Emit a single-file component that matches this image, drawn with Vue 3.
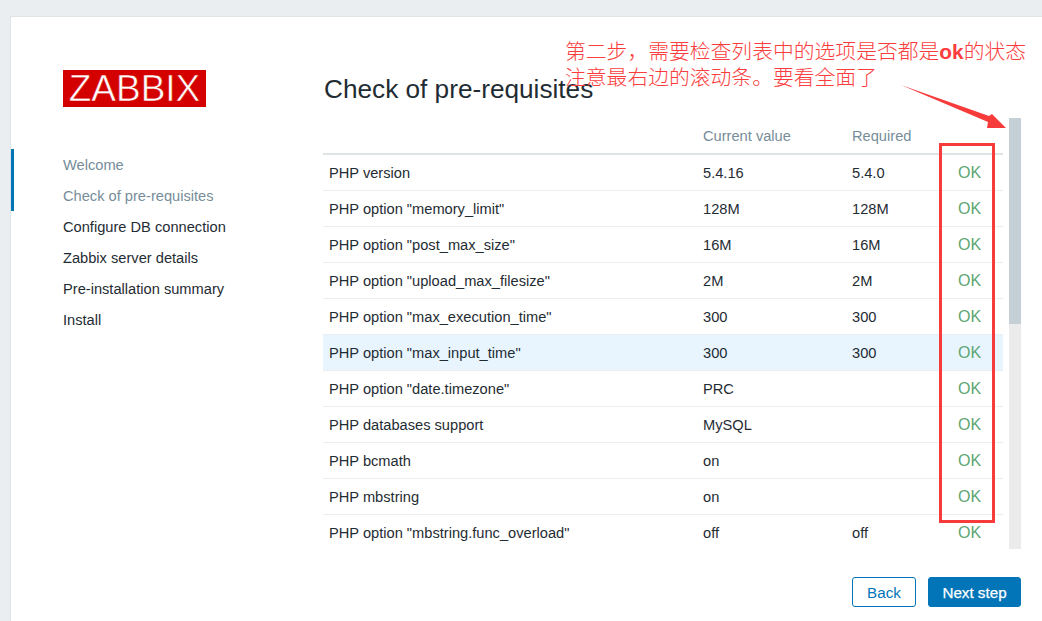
<script setup>
const steps = [
  { label: 'Welcome', done: true },
  { label: 'Check of pre-requisites', done: true },
  { label: 'Configure DB connection', done: false },
  { label: 'Zabbix server details', done: false },
  { label: 'Pre-installation summary', done: false },
  { label: 'Install', done: false },
]
const rows = [
  ['PHP version', '5.4.16', '5.4.0'],
  ['PHP option "memory_limit"', '128M', '128M'],
  ['PHP option "post_max_size"', '16M', '16M'],
  ['PHP option "upload_max_filesize"', '2M', '2M'],
  ['PHP option "max_execution_time"', '300', '300'],
  ['PHP option "max_input_time"', '300', '300'],
  ['PHP option "date.timezone"', 'PRC', ''],
  ['PHP databases support', 'MySQL', ''],
  ['PHP bcmath', 'on', ''],
  ['PHP mbstring', 'on', ''],
  ['PHP option "mbstring.func_overload"', 'off', 'off'],
]
</script>

<template>
  <div class="page">
    <div class="card">
      <aside class="side">
        <div class="logo">ZABBIX</div>
        <ul class="nav">
          <li v-for="s in steps" :key="s.label" :class="{ done: s.done }">{{ s.label }}</li>
        </ul>
      </aside>
      <main class="main">
        <h1 class="title">Check of pre-requisites</h1>
        <div class="scroller">
          <div class="list">
            <table>
              <colgroup>
                <col class="c1" /><col class="c2" /><col class="c3" /><col />
              </colgroup>
              <thead>
                <tr><th></th><th>Current value</th><th>Required</th><th></th></tr>
              </thead>
              <tbody>
                <tr v-for="(r, i) in rows" :key="r[0]" :class="{ hover: i === 5 }">
                  <td>{{ r[0] }}</td>
                  <td>{{ r[1] }}</td>
                  <td>{{ r[2] }}</td>
                  <td class="ok">OK</td>
                </tr>
              </tbody>
            </table>
          </div>
          <div class="track"><div class="thumb"></div></div>
        </div>
        <div class="footer">
          <button class="btn alt">Back</button>
          <button class="btn">Next step</button>
        </div>
      </main>
    </div>

    <div class="note">
      <div class="line">第二步，需要检查列表中的选项是否都是<b>ok</b>的状态</div>
      <div class="line">注意最右边的滚动条。要看全面了</div>
    </div>
    <svg class="arrow" width="1042" height="621" viewBox="0 0 1042 621">
      <polygon points="901,85 989,116 992,114 1006,128 987,128 988,122" fill="#f73a3a" />
    </svg>
    <div class="redbox"></div>
  </div>
</template>

<style>
html, body { margin: 0; background: #ebeef0; }
</style>

<style scoped>
.page {
  position: relative;
  width: 1042px;
  height: 621px;
  overflow: hidden;
  padding: 16px 0 0 10px;
  box-sizing: border-box;
  font-family: "Liberation Sans", Arial, sans-serif;
  font-size: 14.65px;
  color: #1f2c33;
}
.card {
  display: flex;
  height: 640px;
  background: #fff;
  border: 1px solid #dfe4e7;
  border-right: 0;
  border-bottom: 0;
}
.side { width: 312px; flex: none; padding-top: 53px; box-sizing: border-box; }
.logo {
  width: 143px;
  height: 37px;
  margin-left: 52px;
  background: #d40000;
  color: #fff;
  font-size: 37px;
  -webkit-text-stroke: 0.6px #d40000;
  line-height: 38px;
  text-align: center;
  white-space: nowrap;
}
.nav { list-style: none; margin: 42px 0 0; padding: 0; }
.nav li {
  height: 31px;
  line-height: 33px;
  padding-left: 49px;
  border-left: 3px solid transparent;
}
.nav li.done { color: #768d99; border-left-color: #0275b8; }
.main { flex: 1; min-width: 0; }
.title {
  margin: 0;
  padding: 54px 0 0 1px;
  height: 47px;
  font-size: 26.2px;
  line-height: 36px;
  font-weight: 400;
  box-sizing: content-box;
}
.scroller { display: flex; gap: 6px; width: 698px; height: 431px; }
.list { width: 680px; height: 431px; overflow: hidden; flex: none; }
table { width: 680px; border-collapse: separate; border-spacing: 0; table-layout: fixed; }
.c1 { width: 374px; }
.c2 { width: 149px; }
.c3 { width: 94px; }
th {
  height: 35px;
  padding: 0 6px;
  font-weight: 400;
  text-align: left;
  color: #768d99;
  border-bottom: 2px solid #dfe4e7;
}
td {
  height: 35px;
  padding: 0 6px;
  border-bottom: 1px solid #ebeef0;
  white-space: nowrap;
}
tr.hover td { background: #e8f5ff; }
td.ok { color: #5ea673; padding-left: 18px; font-size: 16px; }
.track { width: 12px; height: 431px; background: #ebebeb; flex: none; }
.thumb { width: 12px; height: 206px; background: #c5d0d6; }
.footer { display: flex; justify-content: flex-end; gap: 12px; width: 698px; margin-top: 28px; }
.btn {
  height: 30px;
  width: 93px;
  padding: 0;
  border: 1px solid #0275b8;
  border-radius: 3px;
  background: #0275b8;
  color: #fff;
  font-family: inherit;
  font-size: 15.2px;
  -webkit-text-stroke: 0.25px #fff;
}
.btn.alt { width: 64px; background: #fff; color: #0275b8; -webkit-text-stroke: 0; }
.note {
  position: absolute;
  left: 565px;
  top: 37px;
  color: #fb3d3d;
  font-family: "Noto Sans CJK SC", "Liberation Sans", sans-serif;
  font-size: 20.8px;
  font-weight: 300;
  white-space: nowrap;
}
.line { height: 26px; line-height: 26px; overflow: visible; }
.note b { font-family: "Liberation Sans", sans-serif; font-weight: 700; line-height: 1; }
.arrow { position: absolute; left: 0; top: 0; pointer-events: none; }
.redbox {
  position: absolute;
  left: 939px;
  top: 143px;
  width: 50px;
  height: 374px;
  border: 3px solid #f73a3a;
}
</style>
